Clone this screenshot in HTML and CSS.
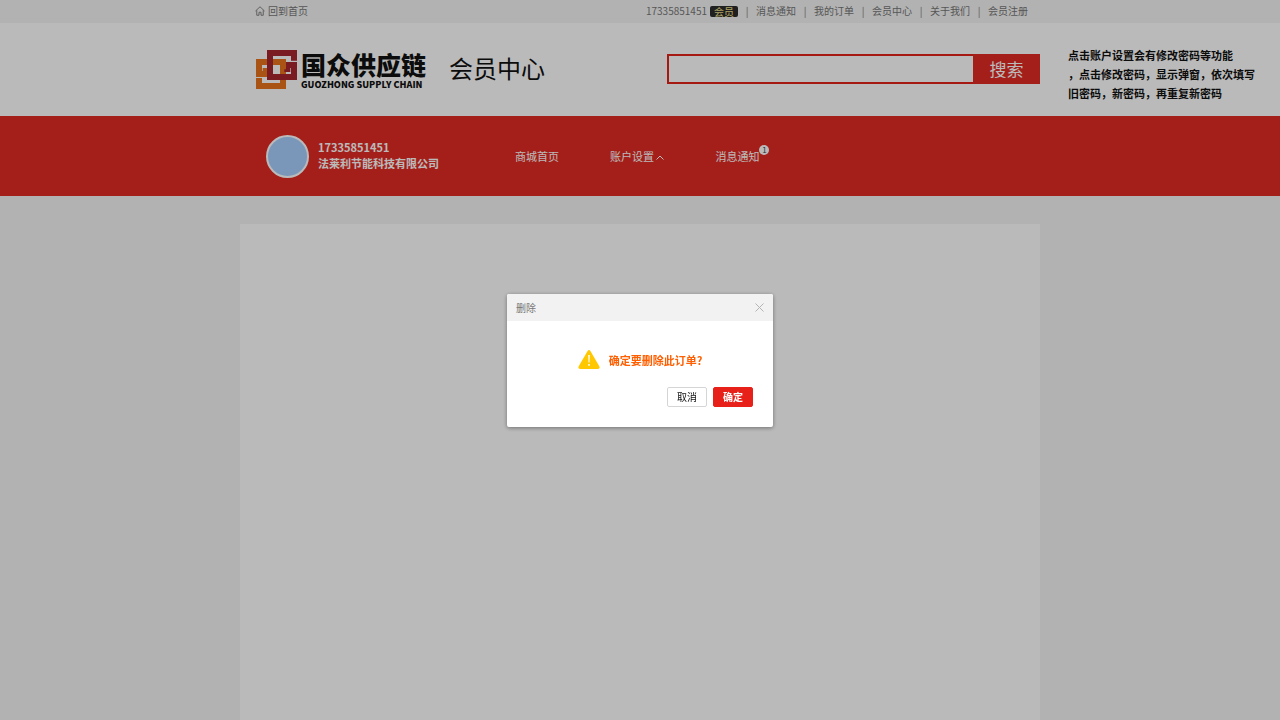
FILE: index.html
```html
<!DOCTYPE html>
<html lang="zh-CN">
<head>
    <meta charset="utf-8">
    <title>会员中心</title>
    <link rel="stylesheet" href="styles.css">
</head>
<body>
    <div class="topbar">
        <div class="container topbar-inner">
            <a class="home" href="#">
                <svg width="10" height="10" viewBox="0 0 20 20" fill="none" stroke="currentColor" stroke-width="1.8">
                    <path d="M1 10 L10 1.5 L19 10 M3.5 8.5 V18.5 H8 V12.5 H12 V18.5 H16.5 V8.5"/>
                </svg>
                回到首页
            </a>
            <div class="links">
                <span class="account">17335851451 <span class="tag">会员</span></span>
                <a href="#">消息通知</a>
                <a href="#">我的订单</a>
                <a href="#">会员中心</a>
                <a href="#">关于我们</a>
                <a href="#">会员注册</a>
            </div>
        </div>
    </div>

    <header class="header">
        <div class="header-main">
            <a class="logo" href="#">
                <svg width="41" height="39" viewBox="0 0 123 117" fill="none" stroke-width="18">
                    <path stroke="#e8731c" d="M9 84 V108 H81 V36 H9 V72 H29 V54"/>
                    <path stroke="#a8242e" d="M114 32 V9 H42 V81 H114 V45 H94 V66"/>
                    <path stroke="#e8731c" d="M53 36 H81 V58"/>
                </svg>
                <span class="logo-text">
                    <span class="logo-cn">国众供应链</span>
                    <span class="logo-en">GUOZHONG SUPPLY CHAIN</span>
                </span>
            </a>
            <h1>会员中心</h1>
            <form class="search">
                <input type="text" aria-label="搜索">
                <button type="button">搜索</button>
            </form>
        </div>
        <p class="note">点击账户设置会有修改密码等功能<br>，点击修改密码，显示弹窗，依次填写<br>旧密码，新密码，再重复新密码</p>
    </header>

    <div class="banner">
        <div class="container banner-inner">
            <div class="user">
                <div class="avatar"></div>
                <div class="user-info">
                    <div>17335851451</div>
                    <div>法莱利节能科技有限公司</div>
                </div>
            </div>
            <nav class="nav">
                <a href="#">商城首页</a>
                <a href="#">账户设置
                    <svg width="8" height="6" viewBox="0 0 8 6" fill="none" stroke="currentColor"><path d="M0.500 4.500 L4 1 L7.500 4.500"/></svg>
                </a>
                <a href="#">消息通知<span class="badge">1</span></a>
            </nav>
        </div>
    </div>

    <main class="container panel"></main>

    <div class="mask">
        <div class="dialog" role="dialog" aria-labelledby="dialog-title">
            <div class="dialog-head">
                <span id="dialog-title">删除</span>
                <button class="close" type="button" aria-label="关闭">
                    <svg width="9" height="9" viewBox="0 0 9 9" stroke="#b4b4b4"><path d="M0.500 0.500 L8.500 8.500 M8.500 0.500 L0.500 8.500"/></svg>
                </button>
            </div>
            <div class="message">
                <svg width="22" height="19" viewBox="0 0 22 19">
                    <path fill="#ffc800" d="M9.600 1 Q11 -0.900 12.400 1 L21.300 16.300 Q22.200 18.800 20 19 H2 Q-0.200 18.800 0.700 16.300 Z"/>
                    <path fill="#fff" d="M10.200 5 h1.600 l-0.300 7.500 h-1 Z M10.200 14 h1.600 v1.700 h-1.600 Z"/>
                </svg>
                <span>确定要删除此订单?</span>
            </div>
            <div class="actions">
                <button class="btn" type="button">取消</button>
                <button class="btn primary" type="button">确定</button>
            </div>
        </div>
    </div>
</body>
</html>
```
FILE: styles.css
```css
* {
    box-sizing: border-box;
}
body {
    margin: 0;
    min-height: 100vh;
    display: flex;
    flex-direction: column;
    background: #f4f4f4;
    font-family: "Noto Sans CJK SC", sans-serif;
    font-size: 11px;
    color: #111;
}
a {
    color: inherit;
    text-decoration: none;
}
button, input {
    font-family: inherit;
}
.container {
    width: 100%;
    max-width: 800px;
    margin: 0 auto;
}

/* top bar */
.topbar {
    padding-bottom: 1px;
    color: #777;
    font-size: 10px;
    line-height: 22px;
}
.topbar-inner {
    display: flex;
    justify-content: space-between;
    padding: 0 12px 0 15px;
}
.home {
    display: flex;
    align-items: center;
    gap: 3px;
}
.links {
    display: flex;
}
.links a::before {
    content: "|";
    display: inline-block;
    width: 18px;
    text-align: center;
}
.account {
    display: flex;
    align-items: center;
    gap: 3px;
}
.tag {
    width: 28px;
    border-radius: 2px;
    background: #2c2c2c;
    color: #f0e08a;
    line-height: 11px;
    text-align: center;
}

/* header */
.header {
    display: grid;
    grid-template-columns: 1fr minmax(0, 800px) 1fr;
    align-items: center;
    height: 93px;
    background: #fff;
}
.header-main {
    grid-column: 2;
    display: flex;
    align-items: center;
    padding-left: 16px;
}
.logo {
    display: flex;
    align-items: center;
    gap: 4px;
}
.logo-text {
    display: flex;
    flex-direction: column;
    gap: 3px;
}
.logo-cn {
    font-size: 25px;
    font-weight: 900;
    line-height: 26px;
}
.logo-en {
    font-size: 9px;
    font-weight: 900;
    line-height: 9px;
    white-space: nowrap;
}
h1 {
    margin: 0 0 3px 23px;
    font-size: 24px;
    font-weight: 400;
    line-height: 36px;
}
.search {
    display: flex;
    width: 373px;
    height: 30px;
    margin: 0 0 2px auto;
}
.search input {
    flex: 1;
    min-width: 0;
    border: 1px solid #e2231a;
    border-width: 2px 0 2px 2px;
    background: #fff;
}
.search button {
    width: 67px;
    padding: 0;
    border: 0;
    background: #e32b24;
    color: #fff;
    font-size: 17px;
}
.note {
    margin: 10px 0 0 28px;
    font-weight: 700;
    line-height: 19px;
    white-space: nowrap;
}

/* banner */
.banner {
    background: #e32b24;
    color: #fff;
}
.banner-inner {
    display: flex;
    align-items: center;
    height: 80px;
    padding-left: 26px;
}
.user {
    display: flex;
    align-items: center;
    gap: 9px;
    width: 249px;
    font-weight: 700;
    line-height: 16px;
}
.user-info {
    padding-bottom: 2px;
}
.avatar {
    width: 43px;
    height: 43px;
    border: 2px solid #fff;
    border-radius: 50%;
    background: #a8cfff;
}
.nav {
    display: flex;
    gap: 51px;
}
.nav a {
    position: relative;
}
.badge {
    position: absolute;
    left: 100%;
    top: -3px;
    width: 10px;
    height: 10px;
    border-radius: 50%;
    background: #fff;
    color: #444;
    font-size: 8px;
    line-height: 10px;
    text-align: center;
}

.panel {
    flex: 1;
    margin-top: 28px;
    background: #fff;
}

/* dialog */
.mask {
    position: fixed;
    inset: 0;
    display: flex;
    align-items: center;
    justify-content: center;
    background: rgba(0, 0, 0, 0.27);
}
.dialog {
    width: 266px;
    height: 133px;
    border-radius: 2px;
    background: #fff;
    box-shadow: 0 1px 4px rgba(0, 0, 0, 0.4);
}
.dialog-head {
    display: flex;
    align-items: center;
    justify-content: space-between;
    height: 27px;
    padding: 0 9px;
    border-radius: 2px 2px 0 0;
    background: #f2f2f2;
    color: #777;
    font-size: 10px;
}
.close {
    display: flex;
    padding: 0;
    border: 0;
    background: none;
}
.message {
    display: flex;
    align-items: center;
    justify-content: center;
    gap: 9px;
    height: 20px;
    margin-top: 29px;
    color: #ff5f00;
    font-weight: 700;
}
.actions {
    display: flex;
    justify-content: flex-end;
    gap: 6px;
    margin-top: 17px;
    padding-right: 20px;
}
.btn {
    width: 40px;
    height: 20px;
    padding: 0;
    border: 1px solid #d5d5d5;
    border-radius: 2px;
    background: #fff;
    color: #111;
    font-size: 10px;
    line-height: 18px;
}
.primary {
    border-color: #e8201a;
    background: #e8201a;
    color: #fff;
    font-weight: 700;
}
```
